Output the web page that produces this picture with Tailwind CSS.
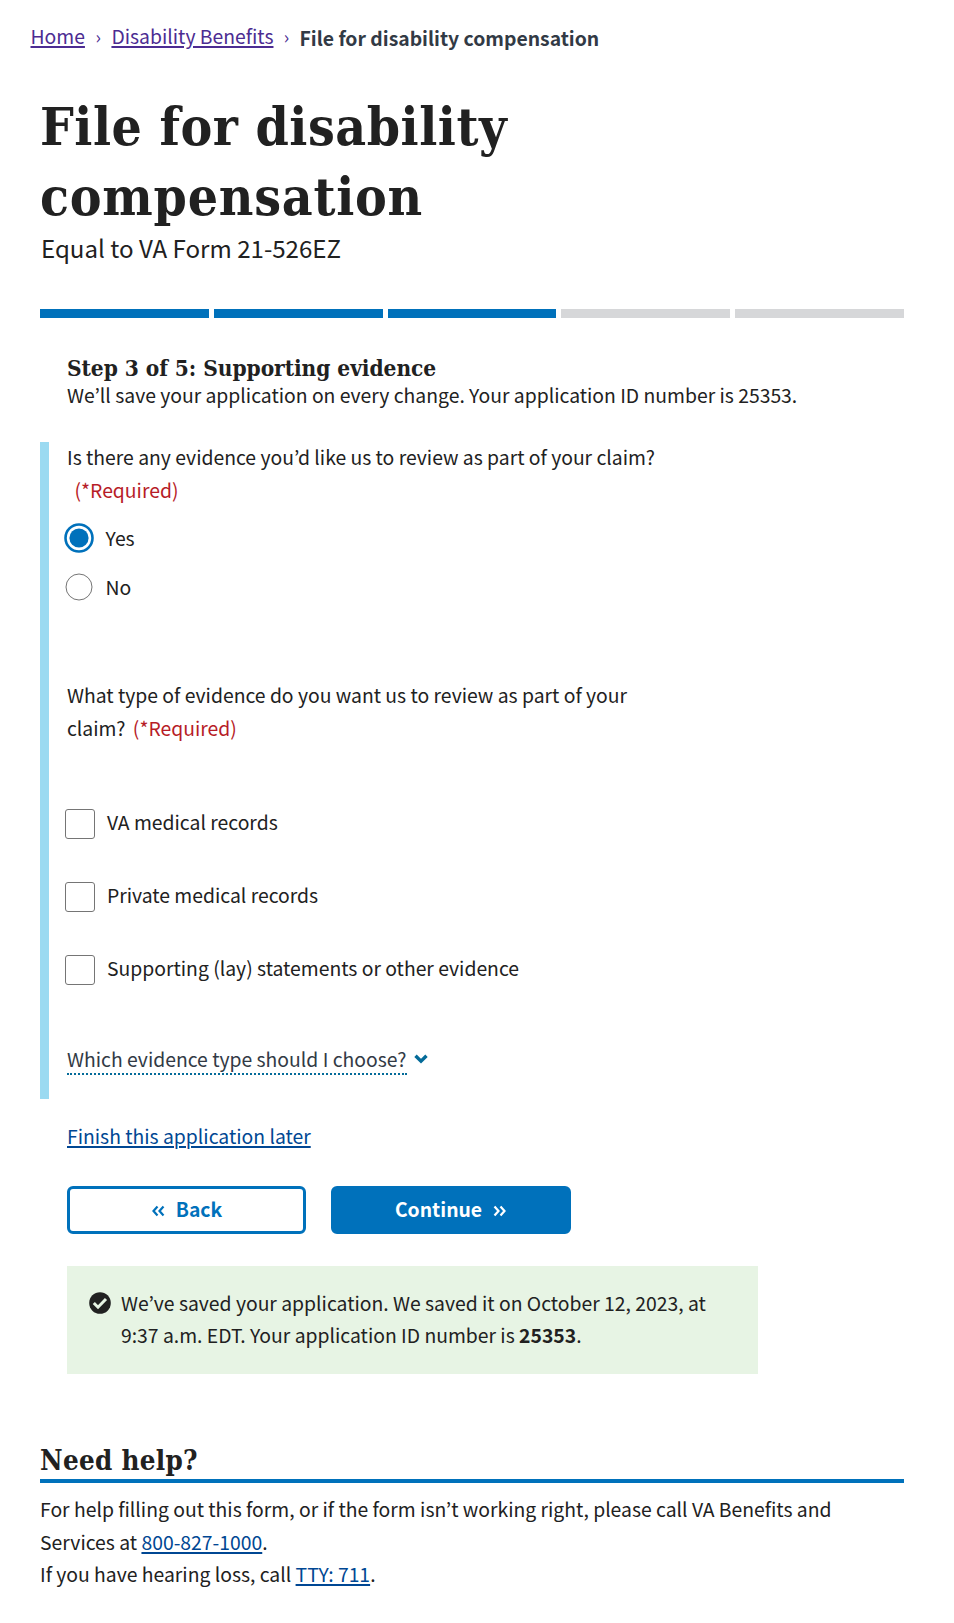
<!DOCTYPE html>
<html lang="en">
<head>
<meta charset="utf-8">
<title>File for disability compensation</title>
<script src="https://cdn.jsdelivr.net/npm/@tailwindcss/browser@4"></script>
</head>
<body class="bg-white text-[#212121] font-['Noto_Sans_CJK_JP','Noto_Sans',sans-serif] text-[19.35px]">
<nav class="flex items-start pt-6 pl-[30.5px] h-12 leading-6">
  <a href="#" class="text-[#4c2c92] underline underline-offset-2 decoration-2">Home</a>
  <span class="w-[26.5px] text-center text-[18px] text-[#4c2c92] leading-6">›</span>
  <a href="#" class="text-[#4c2c92] underline underline-offset-2 decoration-2">Disability Benefits</a>
  <span class="w-[26px] text-center text-[18px] text-[#4c2c92] leading-6">›</span>
  <span class="font-bold text-[#323a45] pt-0.5">File for disability compensation</span>
</nav>
<main class="pl-10 w-[904px]">
  <h1 class="mt-[43px] mb-px font-['DejaVu_Serif_Condensed','DejaVu_Serif',serif] font-bold text-[53px] leading-[70px]"><span class="tracking-[0.5px]">File for disability</span><br><span class="tracking-[0.75px]">compensation</span></h1>
  <p class="text-[24.1px] leading-8 pl-px">Equal to VA Form 21-526EZ</p>
  <div class="mt-[45px] flex gap-[5px] h-[9px]">
    <div class="flex-1 bg-[#0071bb]"></div><div class="flex-1 bg-[#0071bb]"></div><div class="flex-1 bg-[#0071bb]"></div><div class="flex-1 bg-[#d6d7d9]"></div><div class="flex-1 bg-[#d6d7d9]"></div>
  </div>
  <div class="pl-[27px] mt-9">
    <h2 class="font-['DejaVu_Serif_Condensed','DejaVu_Serif',serif] font-bold text-[22.5px] leading-7 tracking-[-0.06px]">Step 3 of 5: Supporting evidence</h2>
    <p class="leading-[26px]">We’ll save your application on every change. Your application ID number is 25353.</p>
  </div>
  <section class="mt-[34px] h-[657px] border-l-9 border-[#9bdaf1] pl-[18px] flow-root">
    <p class="-mt-px leading-[33px]">Is there any evidence you’d like us to review as part of your claim?<br><span class="ml-[7.5px] text-[#b71c27]">(*Required)</span></p>
    <div class="mt-2 flex items-center h-12">
      <svg class="-ml-[3.5px] -mt-0.5" width="30" height="30" viewBox="0 0 30 30"><circle cx="15" cy="15" r="13.5" fill="#fff" stroke="#0071bb" stroke-width="2.6"/><circle cx="15" cy="15" r="9.6" fill="#0071bb"/></svg>
      <span class="ml-3">Yes</span>
    </div>
    <div class="flex items-center h-[49px]">
      <svg class="-ml-[3.5px] -mt-0.5" width="30" height="30" viewBox="0 0 30 30"><circle cx="15" cy="15" r="13" fill="#fff" stroke="#757575"/></svg>
      <span class="ml-3">No</span>
    </div>
    <p class="mt-[67px] leading-[33px]">What type of evidence do you want us to review as part of your<br>claim? <span class="ml-[3px] text-[#b71c27]">(*Required)</span></p>
    <div class="mt-[42px]">
      <div class="flex items-center h-[73px]"><span class="-ml-[2px] size-[30px] rounded-[3px] border border-[#757575]"></span><span class="ml-[12px] -mt-0.5">VA medical records</span></div>
      <div class="flex items-center h-[73px]"><span class="-ml-[2px] size-[30px] rounded-[3px] border border-[#757575]"></span><span class="ml-[12px] -mt-0.5">Private medical records</span></div>
      <div class="flex items-center h-[73px]"><span class="-ml-[2px] size-[30px] rounded-[3px] border border-[#757575]"></span><span class="ml-[12px] -mt-0.5">Supporting (lay) statements or other evidence</span></div>
    </div>
    <div class="mt-[39px] flex items-start">
      <span class="leading-7 border-b-2 border-dotted border-[#046b99] text-[#323a45]">Which evidence type should I choose?</span>
      <svg class="ml-[7px] mt-[9px]" width="14" height="10" viewBox="0 0 14 10"><path d="M1.5 1.800 7 7.200l5.500-5.400" fill="none" stroke="#046b99" stroke-width="3.400"/></svg>
    </div>
  </section>
  <div class="pl-[27px] mt-[23px]">
    <p class="leading-7"><a href="#" class="text-[#004793] underline decoration-2 underline-offset-2">Finish this application later</a></p>
    <div class="mt-9 flex gap-[25px] font-bold leading-10">
      <button class="w-[239px] h-12 rounded-md border-[3px] border-[#0071bb] text-[#0071bb] flex items-start justify-center gap-[11px]"><svg class="mt-[15.5px]" width="14" height="12" viewBox="0 0 14 12" fill="none" stroke="currentColor" stroke-width="2.2"><path d="M6.5 1.500 2.500 6l4 4.500M12.500 1.500 8.500 6l4 4.500"/></svg><span>Back</span></button>
      <button class="w-60 h-12 rounded-md border-[3px] border-[#0071bb] bg-[#0071bb] text-white flex items-start justify-center gap-[11px]"><span>Continue</span><svg class="mt-[15.5px]" width="14" height="12" viewBox="0 0 14 12" fill="none" stroke="currentColor" stroke-width="2.2"><path d="m1.500 1.500 4 4.500-4 4.500M7.500 1.500l4 4.500-4 4.500"/></svg></button>
    </div>
    <div class="mt-8 w-[691px] h-[108px] bg-[#e7f4e4] pt-[21px] pl-[22px] flex">
      <svg class="mt-[5px] shrink-0" width="22" height="22" viewBox="0 0 22 22"><circle cx="11" cy="11" r="10.8" fill="#212121"/><path d="m4.800 11 4.200 4.200 8-8.200" fill="none" stroke="#e7f4e4" stroke-width="3"/></svg>
      <p class="ml-2.5 leading-8">We’ve saved your application. We saved it on October 12, 2023, at<br>9:37 a.m. EDT. Your application ID number is <b>25353</b>.</p>
    </div>
  </div>
  <h2 class="mt-[68px] pb-px border-b-4 border-[#0071bb] font-['DejaVu_Serif_Condensed','DejaVu_Serif',serif] font-bold text-[27.5px] leading-9 tracking-[0.3px]">Need help?</h2>
  <p class="mt-2.5 leading-[32.5px] whitespace-nowrap">For help filling out this form, or if the form isn’t working right, please call VA Benefits and<br>Services at <a href="#" class="text-[#004793] underline decoration-2 underline-offset-2">800-827-1000</a>.<br>If you have hearing loss, call <a href="#" class="text-[#004793] underline decoration-2 underline-offset-2">TTY: 711</a>.</p>
</main>
</body>
</html>
